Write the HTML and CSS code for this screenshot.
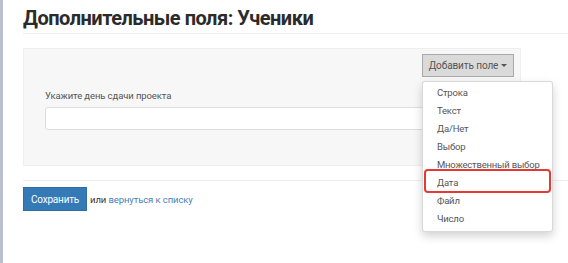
FILE: index.html
```html
<!DOCTYPE html>
<html lang="ru">
<head>
    <meta charset="UTF-8">
    <title>Дополнительные поля: Ученики</title>
    <link rel="stylesheet" href="styles.css">
</head>
<body>
<div class="page">
    <!-- Header -->
    <h1 class="title">Дополнительные поля: Ученики</h1>

    <!-- Fields panel -->
    <div class="panel">
        <div class="panel-head">
            <div class="dropdown">
                <button class="add-btn">Добавить поле <span class="caret"></span></button>
                <ul class="menu">
                    <li>Строка</li>
                    <li>Текст</li>
                    <li>Да/Нет</li>
                    <li>Выбор</li>
                    <li>Множественный выбор</li>
                    <li class="marked">Дата</li>
                    <li>Файл</li>
                    <li>Число</li>
                </ul>
            </div>
        </div>
        <label class="field-label">Укажите день сдачи проекта</label>
        <input type="text" class="field-input">
    </div>

    <!-- Actions -->
    <div class="actions">
        <button class="save">Сохранить</button>
        <span class="or">или <a href="#">вернуться к списку</a></span>
    </div>
</div>
</body>
</html>
```

FILE: styles.css
```css
/* General */
* {
    margin: 0;
    padding: 0;
    box-sizing: border-box;
}
body {
    font-family: Roboto, 'Liberation Sans', sans-serif;
    background: #fff;
    color: #555;
}

/* Page wrapper with the grey rail on the left */
.page {
    height: 263px;
    border-left: 3px solid #b9c0cc;
    padding-left: 20px;
    overflow: hidden;
}

/* Header */
.title {
    font-family: Roboto, sans-serif;
    font-size: 20px;
    font-weight: 700;
    color: #2b2b2b;
    line-height: 26px;
    letter-spacing: -0.5px;
    padding-top: 5px;
    padding-bottom: 2px;
    border-bottom: 1px solid #eee;
}

/* Panel */
.panel {
    width: 498px;
    margin-top: 14px;
    background: #f7f7f7;
    border: 1px solid #eee;
    padding: 5px 6px 35px 21px;
}
.panel-head {
    display: flex;
    justify-content: flex-end;
    height: 23px;
}
.dropdown {
    position: relative;
}
.add-btn {
    width: 92px;
    height: 23px;
    background: #dadada;
    border: 1px solid #aaa;
    color: #555;
    font-family: Roboto, sans-serif;
    font-size: 10px;
    letter-spacing: -0.1px;
    display: flex;
    align-items: center;
    justify-content: center;
    gap: 3px;
}
.caret {
    display: inline-block;
    width: 0;
    height: 0;
    border-top: 3px solid #555;
    border-left: 3px solid transparent;
    border-right: 3px solid transparent;
}

/* Dropdown menu */
.menu {
    position: absolute;
    top: 27px;
    left: 0;
    width: 131px;
    list-style: none;
    background: #fff;
    border: 1px solid rgba(0,0,0,0.15);
    border-radius: 3px;
    box-shadow: 0 4px 10px rgba(0,0,0,0.18);
    padding: 2px 0 3px;
    z-index: 5;
}
.menu li {
    position: relative;
    height: 18px;
    line-height: 18px;
    padding-left: 14px;
    font-size: 9.5px;
    letter-spacing: -0.2px;
    color: #555;
    white-space: nowrap;
}
.menu li.marked::after {
    content: "";
    position: absolute;
    left: 1px;
    right: 1px;
    top: -5px;
    bottom: -1px;
    border: 2.5px solid #e53935;
    border-radius: 4px;
}

/* Field */
.field-label {
    display: block;
    margin-top: 12px;
    font-size: 9.5px;
    letter-spacing: -0.1px;
    line-height: 14px;
    color: #555;
}
.field-input {
    display: block;
    width: 455px;
    height: 23px;
    margin-top: 4px;
    border: 1px solid #ddd;
    border-radius: 3px;
    background: #fff;
}

/* Actions */
.actions {
    margin-top: 14px;
    border-top: 1px solid #eee;
    padding-top: 6px;
    display: flex;
    align-items: center;
    gap: 3px;
}
.save {
    width: 64px;
    height: 24px;
    background: #337ab7;
    border: 1px solid #2e6da4;
    color: #fff;
    font-family: Roboto, sans-serif;
    font-size: 10px;
    letter-spacing: -0.2px;
}
.or {
    font-size: 9.5px;
    letter-spacing: -0.1px;
    color: #333;
}
.or a {
    color: #4a7fb8;
    text-decoration: none;
}
```
